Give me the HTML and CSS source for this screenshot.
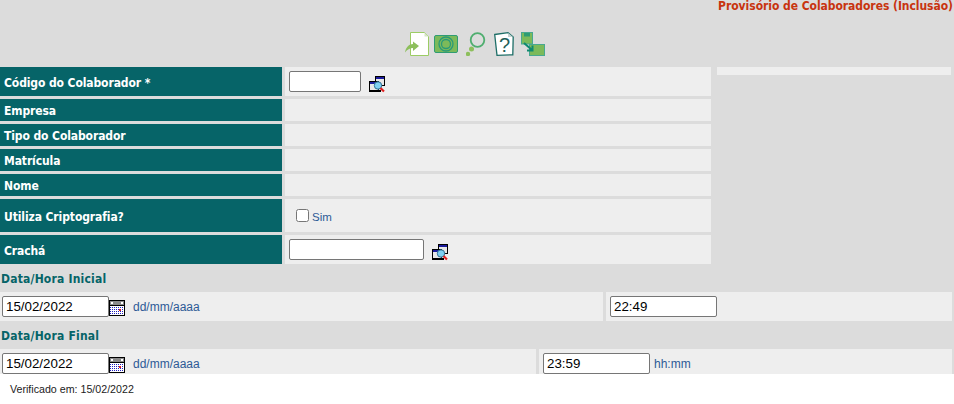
FILE: index.html
```html
<!DOCTYPE html>
<html lang="pt-BR">
<head>
  <meta charset="UTF-8">
  <title>Provisório de Colaboradores</title>
  <link rel="stylesheet" href="styles.css">
</head>
<body>
  <div class="page">
    <div class="titulo">Provisório de Colaboradores (Inclusão)</div>

    <!-- barra de icones -->
    <div class="toolbar">
      <svg class="ico" width="24" height="24" viewBox="0 0 24 24">
        <path d="M5.500 .5H19.500L23.500 4.500V23.500H5.500Z" fill="#fff" stroke="#9ccc65"/>
        <path d="M19.500 .5V4.500H23.500Z" fill="#d5e6c6"/>
        <path d="M14 14L8 9.500V12C4 12 1 15 0 20.500C2 17.500 5 16 8 16V19Z" fill="#8dbf5c"/>
      </svg>
      <svg class="ico banco" width="24" height="18" viewBox="0 0 24 18">
        <rect x=".5" y=".5" width="23" height="17" rx="1.500" fill="#7cba5a" stroke="#2f9c74"/>
        <circle cx="12" cy="9" r="7" fill="none" stroke="#2a9a78" stroke-width="1.300"/>
        <circle cx="12" cy="9" r="4.500" fill="none" stroke="#2a9a78" stroke-width="1.300"/>
      </svg>
      <svg class="ico busca" width="20" height="24" viewBox="0 0 20 24">
        <circle cx="11.500" cy="8" r="6.800" fill="none" stroke="#4fae6f" stroke-width="1.800"/>
        <circle cx="5.500" cy="17" r="2.500" fill="#8dbf5c"/>
        <circle cx="2" cy="22" r="2.200" fill="#8dbf5c"/>
      </svg>
      <svg class="ico busca" width="20" height="24" viewBox="0 0 20 24">
        <path d="M.7 2.500L14 .7L19.200 5L18.800 22.800L3 23.300Z" fill="#fff" stroke="#1f6f68" stroke-width="1.300"/>
        <path d="M14 1V5H19Z" fill="#c4d4d2"/>
        <text x="5" y="19.500" class="ico-ask">?</text>
      </svg>
      <svg class="ico ultimo" width="24" height="24" viewBox="0 0 24 24">
        <rect x=".5" y=".5" width="11" height="11.500" fill="#7cba5a" stroke="#48a890"/>
        <rect x="3" y="1" width="6" height="3.500" fill="#2f9c74"/>
        <rect x="8.500" y="12.500" width="15" height="11" fill="#7cba5a" stroke="#48a890"/>
        <path d="M3 11L11 18M11.500 13.500V18.500H6" fill="none" stroke="#0f8a70" stroke-width="2"/>
      </svg>
    </div>

    <div class="topo">
      <div class="campos">
        <div class="rot">Código do Colaborador *</div>
        <div class="val">
          <input class="txt cod" type="text">
          <svg class="lupa" width="17" height="17" viewBox="0 0 17 17"><use href="#lupa"/></svg>
        </div>
        <div class="rot">Empresa</div><div class="val"></div>
        <div class="rot">Tipo do Colaborador</div><div class="val"></div>
        <div class="rot">Matrícula</div><div class="val"></div>
        <div class="rot">Nome</div><div class="val"></div>
        <div class="rot">Utiliza Criptografia?</div>
        <div class="val">
          <label class="chk"><input type="checkbox"><span class="dica sim">Sim</span></label>
        </div>
        <div class="rot">Crachá</div>
        <div class="val">
          <input class="txt crc" type="text">
          <svg class="lupa" width="17" height="17" viewBox="0 0 17 17"><use href="#lupa"/></svg>
        </div>
      </div>
      <div class="lateral"></div>
    </div>

    <div class="secao">Data/Hora Inicial</div>
    <div class="linha ini">
      <div class="cel">
        <input class="txt data" type="text" value="15/02/2022">
        <svg class="cal" width="16" height="16" viewBox="0 0 16 16"><use href="#cal"/></svg>
        <span class="dica fmt">dd/mm/aaaa</span>
      </div>
      <div class="cel">
        <input class="txt hora" type="text" value="22:49">
      </div>
    </div>

    <div class="secao">Data/Hora Final</div>
    <div class="linha fin">
      <div class="cel">
        <input class="txt data" type="text" value="15/02/2022">
        <svg class="cal" width="16" height="16" viewBox="0 0 16 16"><use href="#cal"/></svg>
        <span class="dica fmt">dd/mm/aaaa</span>
      </div>
      <div class="cel">
        <input class="txt hora" type="text" value="23:59">
        <span class="dica">hh:mm</span>
      </div>
    </div>
  </div>

  <div class="rodape">Verificado em: 15/02/2022</div>

  <!-- simbolos reaproveitados -->
  <svg class="defs" width="0" height="0">
    <symbol id="lupa" viewBox="0 0 17 17">
      <rect x="6.500" y=".5" width="9" height="9" fill="#e8e8e8" stroke="#000"/>
      <rect x="7" y="1" width="8" height="2" fill="#1a1a9c"/>
      <rect x=".5" y="5.500" width="9" height="9" fill="#e8e8e8" stroke="#000"/>
      <rect x="1" y="6" width="8" height="2" fill="#1a1a9c"/>
      <rect x="0" y="14" width="12" height="2" fill="#000"/>
      <circle cx="9" cy="9.500" r="3.700" fill="#7fd0f2" stroke="#2f6f92"/>
      <path d="M11.500 12L15 15.500" stroke="#e02020" stroke-width="2.200"/>
    </symbol>
    <symbol id="cal" viewBox="0 0 16 16">
      <rect width="16" height="16" fill="#000"/>
      <rect x="1" y="1" width="14" height="4" fill="#8a8a8a"/>
      <rect x="2" y="2" width="2" height="2" fill="#fff"/>
      <rect x="12" y="2" width="2" height="2" fill="#fff"/>
      <rect x="1" y="6" width="14" height="9" fill="#fff"/>
      <path d="M1 7.500H15M1 9.500H15M1 11.500H15M1 13.500H15" stroke="#2020c0" stroke-dasharray="1 1"/>
      <rect x="10" y="9" width="2" height="2" fill="#e02020"/>
    </symbol>
  </svg>
</body>
</html>
```

FILE: styles.css
```css
html, body {
  margin: 0;
  padding: 0;
  background: #ffffff;
  overflow: hidden;
}

.page {
  height: 374px;
  overflow: hidden;
  background: #dcdcdc;
  font-family: "DejaVu Sans Condensed", "DejaVu Sans", Verdana, sans-serif;
}

.titulo {
  height: 31px;
  padding-right: 1px;
  text-align: right;
  font-size: 12px;
  font-weight: bold;
  line-height: 13px;
  letter-spacing: -.05px;
  color: #c8340f;
}

.toolbar {
  height: 36px;
  display: flex;
  justify-content: center;
  align-items: flex-start;
  gap: 5px;
  padding: 1px 4px 0 0;
  box-sizing: border-box;
}
.ico { display: block; }
.banco { margin-top: 3px; }
.busca { margin-left: 3px; }
.ultimo { margin-left: 2px; }
.ico-ask {
  font-family: "Liberation Sans", sans-serif;
  font-size: 20px;
  fill: #1f5f5a;
}

.topo {
  display: flex;
  gap: 6px;
}

.campos {
  display: grid;
  grid-template-columns: 282px 426px;
  grid-template-rows: 29px 22px 22px 22px 22px 33px 29px;
  column-gap: 3px;
  row-gap: 3px;
}
.rot {
  display: flex;
  align-items: center;
  padding: 2px 0 0 4px;
  background: #066468;
  color: #ffffff;
  font-size: 12px;
  font-weight: bold;
  letter-spacing: -.1px;
}
.val {
  display: flex;
  align-items: center;
  background: #eeeeee;
}

.lateral {
  width: 234px;
  height: 8px;
  background: #eeeeee;
}

.txt {
  box-sizing: border-box;
  height: 21px;
  margin: 0;
  padding: 1px 3px;
  border: 1px solid #767676;
  border-radius: 2px;
  background: #ffffff;
  font-family: "Liberation Sans", Arial, sans-serif;
  font-size: 13.333px;
  color: #000000;
}
.cod { width: 72px; margin-left: 4px; }
.crc { width: 135px; margin-left: 4px; }
.data { width: 107px; margin-left: 2px; }
.hora { width: 107px; margin-left: 4px; }

.lupa { margin: 5px 0 0 8px; display: block; }
.cal { margin-top: 3px; display: block; }

.chk {
  display: flex;
  align-items: center;
  margin-left: 11px;
}
.chk input { margin: 0 3px 0 0; width: 13px; height: 13px; }

.dica {
  font-family: "Liberation Sans", Arial, sans-serif;
  font-size: 12px;
  color: #2d5a96;
}
.sim { font-size: 11.500px; margin-top: 3px; }
.fmt { margin-left: 8px; }

.secao {
  height: 28px;
  line-height: 30px;
  padding-left: 1px;
  font-size: 12px;
  font-weight: bold;
  letter-spacing: .2px;
  color: #066468;
}

.linha {
  display: grid;
  column-gap: 3px;
  width: 952px;
  height: 29px;
}
.ini { grid-template-columns: 603px 346px; }
.fin { grid-template-columns: 536px 413px; }
.cel {
  display: flex;
  align-items: center;
  background: #eeeeee;
}
.hora + .dica { margin-left: 4px; }

.rodape {
  padding: 9px 0 0 10px;
  font-family: "Liberation Sans", Arial, sans-serif;
  font-size: 10.670px;
  color: #222222;
}

.defs { position: absolute; }
```
